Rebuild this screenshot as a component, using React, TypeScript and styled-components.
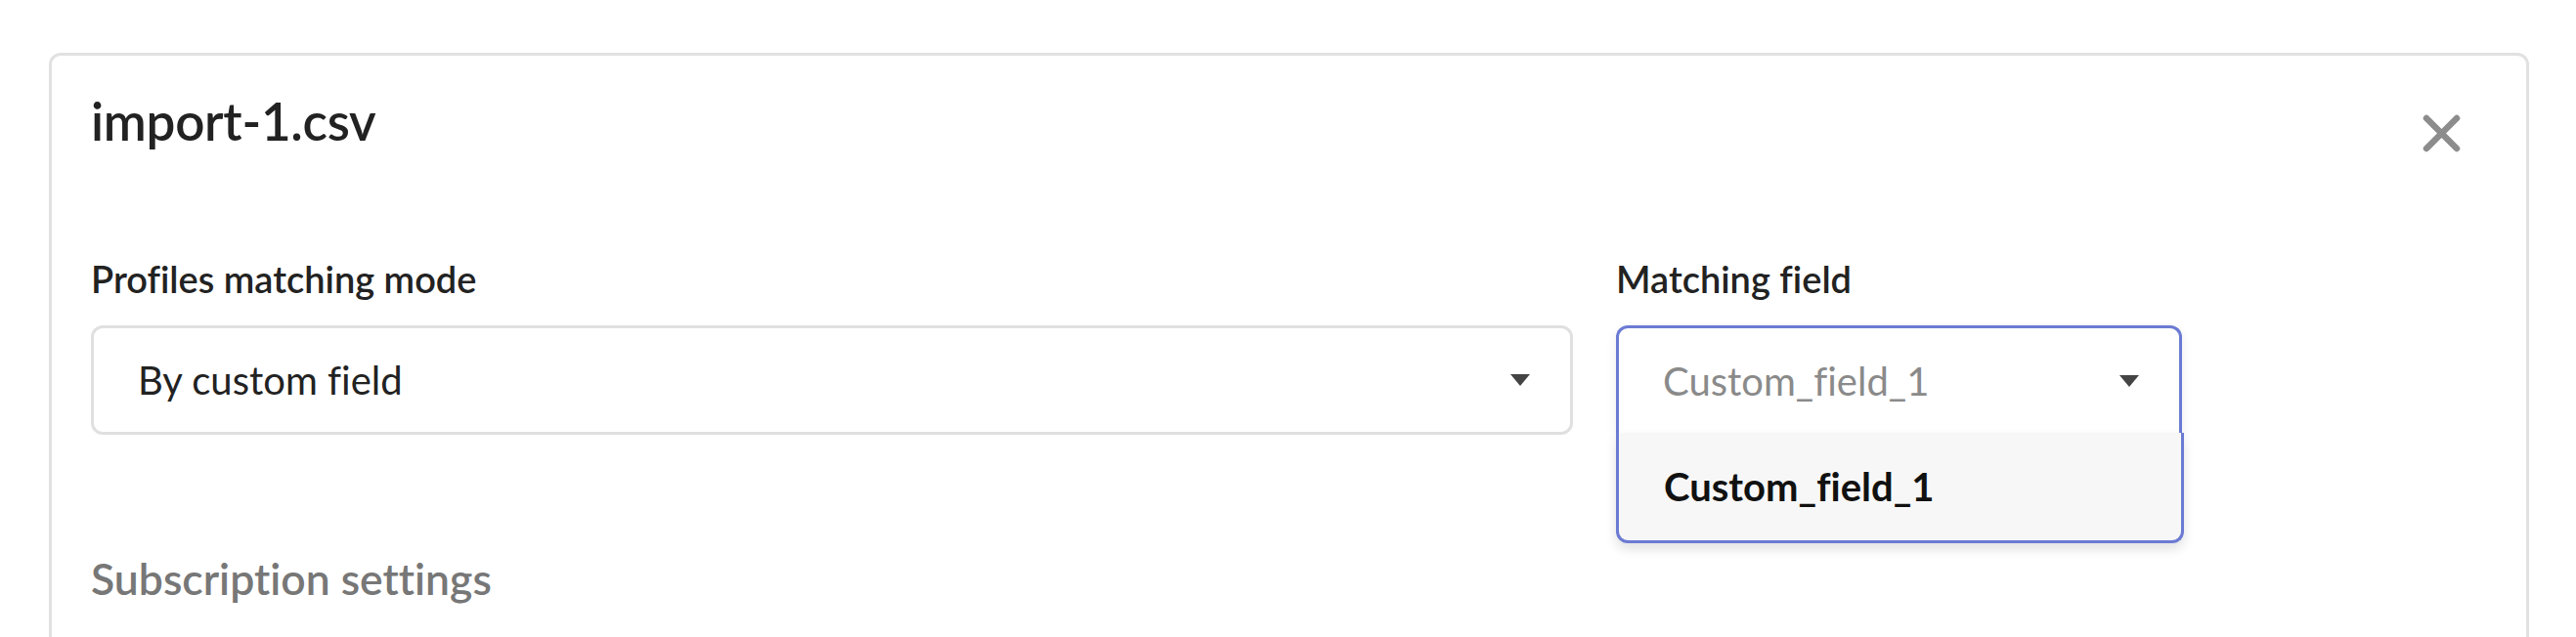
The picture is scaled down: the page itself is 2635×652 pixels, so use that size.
import React from "react";
import styled, { createGlobalStyle } from "styled-components";

const GlobalStyle = createGlobalStyle`
  * {
    box-sizing: border-box;
  }

  html,
  body {
    margin: 0;
    padding: 0;
    background: #fff;
  }

  body {
    font-family: Lato, "Noto Sans", sans-serif;
    font-variant-ligatures: none;
    color: #222;
  }
`;

export default function App() {
  return (
    <>
      <GlobalStyle />
      <Page>
        <Card>
          <Header>
            <Title>import-1.csv</Title>
            <CloseButton aria-label="Close">
              <svg width="39" height="39" viewBox="0 0 39 39">
                <path
                  d="M4 4 L35 35 M35 4 L4 35"
                  stroke="#8c8c8c"
                  strokeWidth="6.5"
                  strokeLinecap="round"
                />
              </svg>
            </CloseButton>
          </Header>

          <FieldsRow>
            <Field $width={1516}>
              <Label>Profiles matching mode</Label>
              <Select>
                <SelectValue>By custom field</SelectValue>
                <Caret />
              </Select>
            </Field>

            <Field $width={579}>
              <Label>Matching field</Label>
              <SelectWrap>
                <Select $open>
                  <SelectValue $placeholder>Custom_field_1</SelectValue>
                  <Caret />
                </Select>
                <Menu>
                  <MenuItem>Custom_field_1</MenuItem>
                </Menu>
              </SelectWrap>
            </Field>
          </FieldsRow>

          <SectionTitle>Subscription settings</SectionTitle>
        </Card>
      </Page>
    </>
  );
}

const Page = styled.div`
  height: 652px;
  overflow: hidden;
  padding: 54px 0 0 50px;
`;

const Card = styled.div`
  width: 2537px;
  min-height: 700px;
  border: 3px solid #e1e1e1;
  border-radius: 12px;
  padding: 35px 40px 0 40px;
`;

const Header = styled.div`
  display: flex;
  justify-content: space-between;
  align-items: flex-start;
`;

const Title = styled.h1`
  margin: 0;
  font-size: 53px;
  line-height: 64px;
  font-weight: 600;
  letter-spacing: -0.3px;
  color: #222;
`;

const CloseButton = styled.button`
  display: flex;
  padding: 0;
  margin: 25px 27px 0 0;
  border: none;
  background: none;
  cursor: pointer;
`;

const FieldsRow = styled.div`
  display: flex;
  gap: 44px;
  margin-top: 105px;
`;

const Field = styled.div<{ $width: number }>`
  display: flex;
  flex-direction: column;
  flex: 0 0 ${(p) => p.$width}px;
`;

const Label = styled.label`
  font-size: 38px;
  line-height: 48px;
  font-weight: 600;
  color: #222;
  margin-bottom: 24px;
`;

const SelectWrap = styled.div`
  position: relative;
`;

const Select = styled.div<{ $open?: boolean }>`
  display: flex;
  align-items: center;
  justify-content: space-between;
  height: ${(p) => (p.$open ? "110px" : "112px")};
  padding: 0 41px 0 45px;
  border: 3px solid ${(p) => (p.$open ? "#6b7bd3" : "#e0e0e0")};
  border-bottom: ${(p) => (p.$open ? "none" : "3px solid #e0e0e0")};
  border-radius: ${(p) => (p.$open ? "12px 12px 0 0" : "12px")};
  background: #fff;
  box-shadow: ${(p) => (p.$open ? "0 4px 12px rgba(0, 0, 0, 0.08)" : "none")};
`;

const SelectValue = styled.span<{ $placeholder?: boolean }>`
  font-size: 40px;
  color: ${(p) => (p.$placeholder ? "#8a8a8a" : "#222")};
`;

const Caret = styled.span`
  width: 0;
  height: 0;
  border-left: 10.5px solid transparent;
  border-right: 10.5px solid transparent;
  border-top: 12px solid #444;
`;

const Menu = styled.div`
  position: absolute;
  top: 100%;
  left: 0;
  width: calc(100% + 2px);
  height: 113px;
  display: flex;
  align-items: center;
  padding-left: 46px;
  background: #f7f7f7;
  border: 3px solid #6b7bd3;
  border-top: none;
  border-radius: 0 0 12px 12px;
  box-shadow: 0 6px 12px rgba(0, 0, 0, 0.12);
`;

const MenuItem = styled.div`
  font-size: 40px;
  font-weight: 700;
  color: #111;
`;

const SectionTitle = styled.h2`
  margin: 119px 0 0 0;
  font-size: 44.5px;
  line-height: 56px;
  font-weight: 600;
  color: #777;
`;
